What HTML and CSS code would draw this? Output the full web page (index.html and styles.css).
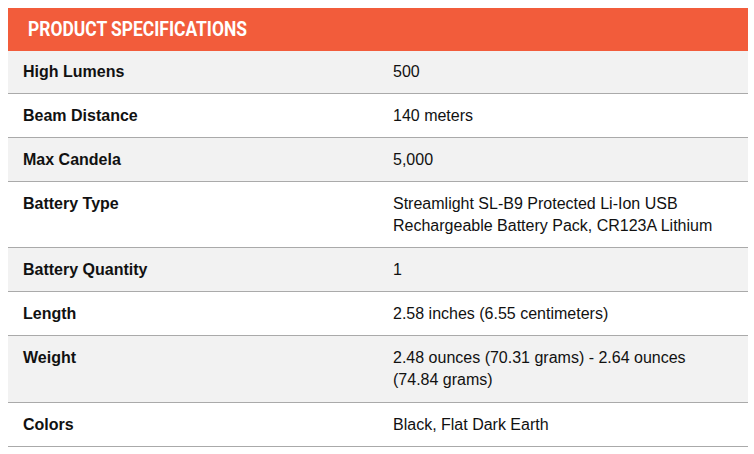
FILE: index.html
```
<!DOCTYPE html>
<html>
<head>
<meta charset="utf-8">
<link rel="stylesheet" href="styles.css">
</head>
<body>
<div class="specs">
  <h2 class="specs-title"><span class="specs-title-text">PRODUCT SPECIFICATIONS</span></h2>
  <table class="specs-table">
    <tr class="odd"><th>High Lumens</th><td>500</td></tr>
    <tr><th>Beam Distance</th><td>140 meters</td></tr>
    <tr class="odd"><th>Max Candela</th><td>5,000</td></tr>
    <tr><th>Battery Type</th><td>Streamlight SL-B9 Protected Li-Ion USB Rechargeable Battery Pack, CR123A Lithium</td></tr>
    <tr class="odd"><th>Battery Quantity</th><td>1</td></tr>
    <tr><th>Length</th><td>2.58 inches (6.55 centimeters)</td></tr>
    <tr class="odd tall"><th>Weight</th><td>2.48 ounces (70.31 grams) - 2.64 ounces (74.84 grams)</td></tr>
    <tr><th>Colors</th><td>Black, Flat Dark Earth</td></tr>
  </table>
</div>
</body>
</html>
```
FILE: styles.css
```
html, body { margin: 0; background: #fff; }
body { padding: 8px; }
.specs { width: 740px; }
.specs-title {
  margin: 0;
  height: 43px;
  box-sizing: border-box;
  padding: 0 20px;
  background: #f25c3b;
  color: #fff;
  font-family: "Roboto", sans-serif;
  font-weight: bold;
  font-size: 21px;
  line-height: 43px;
}
.specs-title-text {
  display: inline-block;
  transform: scaleX(0.83);
  transform-origin: left center;
}
.specs-table {
  width: 100%;
  border-collapse: collapse;
  font-family: "Liberation Sans", Arial, sans-serif;
  font-size: 16px;
  line-height: 22px;
  color: #111;
}
.specs-table tr { border-bottom: 1px solid #aaa; background: #fff; }
.specs-table tr.odd { background: #f2f2f2; }
.specs-table th, .specs-table td {
  width: 50%;
  text-align: left;
  vertical-align: top;
  padding: 11px 15px 10px;
}
.specs-table tr.tall td, .specs-table tr.tall th { padding-bottom: 11px; }
.specs-table tr:first-child th, .specs-table tr:first-child td { padding-top: 10px; }
.specs-table th { font-weight: bold; }
.specs-table td { font-weight: normal; padding-right: 30px; }
```
